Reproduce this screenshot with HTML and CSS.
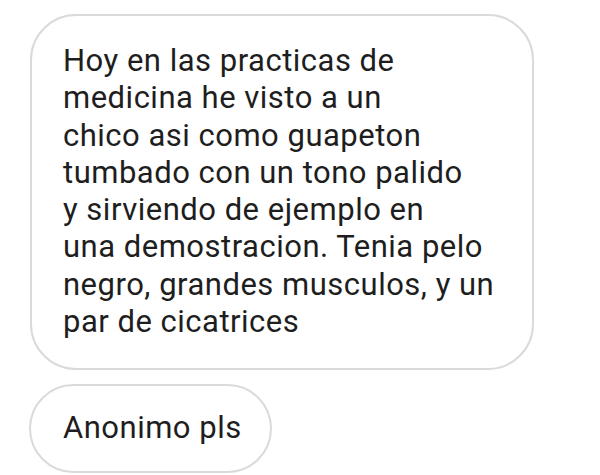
FILE: index.html
```html
<!DOCTYPE html>
<html>
<head>
<meta charset="utf-8">
<link rel="stylesheet" href="styles.css">
</head>
<body>
<div class="chat">
  <div class="bubble bubble-long">Hoy en las practicas de<br>medicina he visto a un<br>chico asi como guapeton<br>tumbado con un tono palido<br>y sirviendo de ejemplo en<br>una demostracion. Tenia pelo<br>negro, grandes musculos, y un<br>par de cicatrices</div>
  <div class="bubble bubble-short">Anonimo pls</div>
</div>
</body>
</html>
```
FILE: styles.css
```css
html, body {
  margin: 0;
  padding: 0;
  background: #ffffff;
}
.chat {
  display: flex;
  flex-direction: column;
  align-items: flex-start;
  gap: 14px;
  padding: 14px 0 0 30px;
  font-family: Roboto, "Noto Sans", sans-serif;
  font-size: 31px;
  line-height: 37.3px;
  letter-spacing: 0.5px;
  color: #1e1e1e;
}
.bubble {
  box-sizing: border-box;
  border: 2px solid #dadada;
  background: #fff;
  white-space: nowrap;
}
.bubble-long {
  width: 504px;
  height: 356px;
  border-radius: 46px;
  padding: 26px 30px 0 31px;
}
.bubble-short {
  margin-left: -1px;
  width: 243px;
  height: 89px;
  border-radius: 45px;
  padding: 23px 32px 0 32px;
}
```
